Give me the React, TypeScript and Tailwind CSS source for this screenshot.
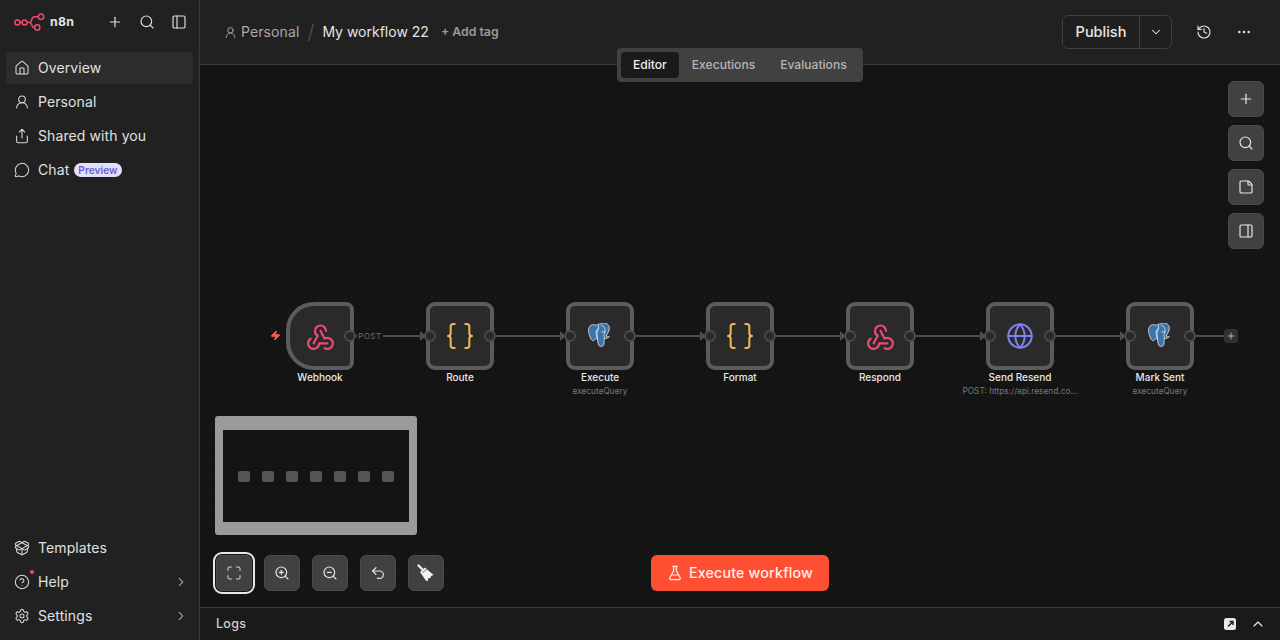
import React from "react";
import { House, UserRound, Share, MessageCircle, PackageOpen, CircleHelp, Settings, ChevronRight, Plus, Search, PanelLeft, PanelRight, History, Ellipsis, ChevronDown, StickyNote, Maximize, ZoomIn, ZoomOut, Undo2, FlaskConical, Braces, Globe, Zap, ChevronUp } from "lucide-react";
import { TbWebhook } from "react-icons/tb";

function Logo() {
  return (
    <svg width="31" height="18" viewBox="0 0 32 18" fill="none" stroke="#ea4b71" strokeWidth="1.5">
      <circle cx="3.500" cy="9.500" r="2.600" />
      <path d="M6.100 9.500h2.200" />
      <circle cx="10.900" cy="9.500" r="2.600" />
      <path d="M13.500 9.500h2.400c2 0 2-1 2.400-3 .4-2 1.400-3 3.400-3h4" />
      <circle cx="27.900" cy="3.500" r="2.800" />
      <path d="M15.900 9.500c2 0 2 .6 2.400 2.400.4 2 1.200 3 3.200 3" />
      <circle cx="24" cy="14.600" r="2.700" />
    </svg>
  );
}

function Postgres() {
  return (
    <svg width="26" height="26" viewBox="0 0 24 24">
      <path d="M6 1.500C2.800 1.500 1 4 1.500 7.800c.4 3 1.800 7.600 3.600 8.400 1.200.6 2.200-.8 3-2 .6.4 1 .5 1.600.4.200 2.500.3 6.400 2.400 7 2 .5 3.400-.6 3.600-3 .1-1 .2-3.600.2-4.400 1.400.3 4-.4 4.800-1.600-1.500.3-2.800.1-3-.6 1.500-2.200 2.900-5 2.900-7.400 0-3.200-3-4.900-6-4.600C13.400.7 10 .8 8.600 2 7.900 1.700 7 1.500 6 1.500z" fill="#3f74a8" stroke="#e8eff6" strokeWidth="0.7" strokeLinejoin="round" />
      <path d="M9.700 14.600c-.5-2-.8-6 .2-8.600.6-1.500 1.300-3 .4-4M11 5.500c-1.500 0-2.700 1.200-2.600 3 .1 1.400.3 3.500 1.300 6.100M13.300 2c1.800.6 3.500 2.300 3.400 5-.1 1.500-.9 2.400-1 3.700 0 1 .4 2.200.5 4M16.700 8.200c-1.400-.3-2.600-.3-3.200.2" fill="none" stroke="#e8eff6" strokeWidth="0.7" strokeLinecap="round" />
    </svg>
  );
}

function Broom() {
  return (
    <svg width="18" height="18" viewBox="0 0 18 18">
      <path d="M1.500 1.500 6 6" stroke="#f2f2f2" strokeWidth="2.200" strokeLinecap="round" />
      <path d="M8 3.500 16.500 11 14 12l-.5 2-2 0-1 3.500-2-1.500L3 8z" fill="#f2f2f2" />
      <path d="M5.200 8.600 9.800 5.400" stroke="#414141" strokeWidth="0.7" />
    </svg>
  );
}

function NavItem({ icon, label, active, chevron, dot, badge }: { icon: React.ReactNode; label: string; active?: boolean; chevron?: boolean; dot?: boolean; badge?: boolean }) {
  return (
    <div className={`relative mx-[6px] flex h-8 items-center rounded pl-2 pr-[5px] ${active ? "bg-[#2c2c2c]" : ""}`}>
      <span className="flex w-4 items-center justify-center text-[#d8d8d8]">{icon}</span>
      <span className="ml-2 pb-[2px] text-[14px] tracking-[0.1px] text-[#e0e0e0]">{label}</span>
      {badge && <span className="ml-[5px] rounded-full bg-[#e2dffa] px-1 text-[10.2px] leading-[14px] font-semibold text-[#6f5fd0]">Preview</span>}
      {dot && <span className="absolute top-[4px] left-[24px] h-1 w-1 rounded-full bg-[#ea4b71]" />}
      {chevron && <ChevronRight size={14} strokeWidth={1.75} className="ml-auto text-[#c4c4c4]" />}
    </div>
  );
}

function Sidebar() {
  return (
    <aside className="flex h-full w-[200px] shrink-0 flex-col border-r border-[#3a3a3a] bg-[#212121] pb-2">
      <div className="flex h-[44px] items-center pr-[12px] pl-[14px]">
        <Logo />
        <span className="ml-[5px] text-[12.3px] font-bold tracking-[0.3px] text-[#e4e4e4]">n8n</span>
        <div className="ml-auto flex items-center gap-4 text-[#e0e0e0]">
          <Plus size={16} strokeWidth={1.75} />
          <Search size={16} strokeWidth={1.75} />
          <PanelLeft size={16} strokeWidth={1.75} />
        </div>
      </div>
      <div className="mt-2 flex flex-col gap-[2px]">
        <NavItem active icon={<House size={16} strokeWidth={1.6} />} label="Overview" />
        <NavItem icon={<UserRound size={16} strokeWidth={1.6} />} label="Personal" />
        <NavItem icon={<Share size={16} strokeWidth={1.6} />} label="Shared with you" />
        <NavItem badge icon={<MessageCircle size={16} strokeWidth={1.6} />} label="Chat" />
      </div>
      <div className="mt-auto flex flex-col gap-[2px]">
        <NavItem icon={<PackageOpen size={16} strokeWidth={1.6} />} label="Templates" />
        <NavItem dot chevron icon={<CircleHelp size={16} strokeWidth={1.6} />} label="Help" />
        <NavItem chevron icon={<Settings size={16} strokeWidth={1.6} />} label="Settings" />
      </div>
    </aside>
  );
}

function Header() {
  return (
    <header className="flex h-[65px] shrink-0 items-center border-b border-[#3a3a3a] bg-[#212121] pr-[28px] pl-[24px]">
      <UserRound size={13} strokeWidth={1.75} className="text-[#a8a8a8]" />
      <span className="ml-[4px] pb-[1px] text-[14px] tracking-[0.1px] text-[#a8a8a8]">Personal</span>
      <span className="mx-[8px] text-[20px] leading-none font-light text-[#555555]">/</span>
      <span className="pb-[1px] text-[14px] text-[#e4e4e4]">My workflow 22</span>
      <span className="ml-[12px] text-[12.3px] font-semibold text-[#9a9a9a]">+ Add tag</span>
      <div className="ml-auto flex h-[34px] items-stretch overflow-hidden rounded-md border border-[#404040] bg-[#1f1f1f] text-[#e6e6e6]">
        <span className="flex w-[77px] items-center justify-center border-r border-[#404040] text-[14.5px] font-medium">Publish</span>
        <span className="flex w-[31px] items-center justify-center"><ChevronDown size={14} strokeWidth={1.75} /></span>
      </div>
      <div className="ml-[24px] flex items-center gap-[24px] text-[#e0e0e0]">
        <History size={16} strokeWidth={1.75} />
        <Ellipsis size={16} strokeWidth={1.75} />
      </div>
    </header>
  );
}

const nodes = [
  { x: 120, label: "Webhook", kind: "webhook", trigger: true },
  { x: 260, label: "Route", kind: "code" },
  { x: 400, label: "Execute", sub: "executeQuery", kind: "pg" },
  { x: 540, label: "Format", kind: "code" },
  { x: 680, label: "Respond", kind: "webhook" },
  { x: 820, label: "Send Resend", sub: "POST: https://api.resend.co...", kind: "globe" },
  { x: 960, label: "Mark Sent", sub: "executeQuery", kind: "pg" },
];

function NodeIcon({ kind }: { kind: string }) {
  if (kind === "webhook") return <TbWebhook size={33} strokeWidth={1.6} className="text-[#ea4b71]" />;
  if (kind === "code") return <Braces size={32} strokeWidth={1.5} className="text-[#f5b556]" />;
  if (kind === "globe") return <Globe size={28} strokeWidth={1.75} className="text-[#7f80ee]" />;
  return <Postgres />;
}

function FlowNode({ n }: { n: (typeof nodes)[number] }) {
  return (
    <div className="absolute top-[237px] flex w-[160px] flex-col items-center" style={{ left: n.x - 80 }}>
      <div className="relative h-[68px] w-[68px]">
        <div className={`flex h-full w-full items-center justify-center border-[4px] border-[#5c5c5c] bg-[#2a2a2a] ${n.trigger ? "rounded-l-[28px] rounded-r-[8px]" : "rounded-[9px]"}`}>
          <NodeIcon kind={n.kind} />
        </div>
        {!n.trigger && <span className="absolute top-[28px] left-[-2px] h-[12px] w-[12px] rounded-full border-2 border-[#4c4c4c] bg-[#2a2a2a]" />}
        <span className="absolute top-[28px] right-[-2px] h-[12px] w-[12px] rounded-full border-2 border-[#4c4c4c] bg-[#2a2a2a]" />
      </div>
      <div className="text-[10px] leading-[14px] font-medium text-[#e8e8e8]">{n.label}</div>
      {n.sub && <div className="mt-[1px] text-[8.3px] leading-[13px] whitespace-nowrap text-[#787878]">{n.sub}</div>}
    </div>
  );
}

function Edge({ x }: { x: number }) {
  return (
    <div className="absolute top-[270px] h-[2px] bg-[#4e4e4e]" style={{ left: x + 36, width: 68 }}>
      <span className="absolute top-[-4px] right-[-2px] h-0 w-0 border-y-[5px] border-l-[6px] border-y-transparent border-l-[#4e4e4e]" />
    </div>
  );
}

function ToolBtn({ children, focus }: { children: React.ReactNode; focus?: boolean }) {
  return (
    <div className={`flex h-9 w-9 items-center justify-center rounded-md border border-[#4a4a4a] bg-[#414141] text-[#e8e8e8] ${focus ? "outline-2 outline-offset-[1px] outline-[#e8e8e8]" : ""}`}>
      {children}
    </div>
  );
}

function Minimap() {
  return (
    <div className="absolute bottom-[72px] left-[15px] flex h-[119px] w-[202px] flex-col rounded-[3px] bg-[#9a9a9a] pt-[14px] pr-2 pb-[13px] pl-2">
      <div className="flex flex-1 items-center justify-between bg-[#141414] px-[15px]">
        {nodes.map((n) => <span key={n.x} className="h-[11px] w-[12px] rounded-[2px] bg-[#555555]" />)}
      </div>
    </div>
  );
}

function Canvas() {
  return (
    <div className="relative flex-1 overflow-hidden bg-[#141414] bg-[radial-gradient(#1f1f1f_1px,transparent_1px)] bg-[size:16px_16px]">
      {nodes.slice(0, -1).map((n) => <Edge key={n.x} x={n.x} />)}
      <div className="absolute top-[270px] left-[996px] h-[2px] w-[30px] bg-[#4e4e4e]" />
      <div className="absolute top-[264px] left-[1024px] flex h-[14px] w-[14px] items-center justify-center rounded-[3px] bg-[#303030] text-[#c8c8c8]"><Plus size={10} strokeWidth={2} /></div>
      <span className="absolute top-[265px] left-[157px] bg-[#141414] px-[1px] text-[8.2px] leading-[12px] tracking-[0.4px] text-[#6e6e6e]">POST</span>
      <Zap size={11} strokeWidth={2} className="absolute top-[265px] left-[70px] fill-[#f0604d] text-[#f0604d]" />
      {nodes.map((n) => <FlowNode key={n.x} n={n} />)}

      <div className="absolute top-[16px] right-[16px] flex flex-col gap-2">
        <ToolBtn><Plus size={16} strokeWidth={1.75} /></ToolBtn>
        <ToolBtn><Search size={16} strokeWidth={1.75} /></ToolBtn>
        <ToolBtn><StickyNote size={16} strokeWidth={1.75} /></ToolBtn>
        <ToolBtn><PanelRight size={16} strokeWidth={1.75} /></ToolBtn>
      </div>

      <Minimap />

      <div className="absolute bottom-[16px] left-[16px] flex gap-3">
        <ToolBtn focus><Maximize size={16} strokeWidth={1.5} /></ToolBtn>
        <ToolBtn><ZoomIn size={16} strokeWidth={1.75} /></ToolBtn>
        <ToolBtn><ZoomOut size={16} strokeWidth={1.75} /></ToolBtn>
        <ToolBtn><Undo2 size={16} strokeWidth={1.75} /></ToolBtn>
        <ToolBtn><Broom /></ToolBtn>
      </div>

      <div className="absolute bottom-[16px] left-[451px] flex h-9 w-[178px] items-center justify-center gap-[6px] rounded-md bg-[#ff4f33] text-[14.2px] font-medium tracking-[0.2px] text-[#fff0ec]">
        <FlaskConical size={16} strokeWidth={1.75} />
        Execute workflow
      </div>
    </div>
  );
}

function Tabs() {
  const tabs = ["Editor", "Executions", "Evaluations"];
  return (
    <div className="absolute top-[48px] left-[417px] flex h-[34px] w-[246px] items-center gap-[1px] rounded bg-[#414141] p-1">
      {tabs.map((t, i) => (
        <span key={t} className={`flex h-[26px] items-center justify-center rounded px-3 text-[12.1px] font-medium ${i === 0 ? "bg-[#1a1a1a] text-[#efefef]" : "text-[#b5b5b5]"}`}>{t}</span>
      ))}
    </div>
  );
}

export default function App() {
  return (
    <div className="flex h-screen w-full overflow-hidden bg-[#141414] font-['Inter',sans-serif]">
      <Sidebar />
      <main className="relative flex h-full min-w-0 flex-1 flex-col">
        <Header />
        <Canvas />
        <Tabs />
        <footer className="flex h-[33px] shrink-0 items-center border-t border-[#3a3a3a] bg-[#1a1a1a] pr-[14px] pl-4">
          <span className="text-[12.5px] font-medium tracking-[0.3px] text-[#d0d0d0]">Logs</span>
          <div className="ml-auto flex items-center gap-[13px] text-[#e8e8e8]">
            <svg width="14" height="14" viewBox="0 0 14 14" fill="none">
              <rect x="1" y="1" width="12" height="12" rx="2.500" fill="#e8e8e8" />
              <path d="M5 9.500 10 4.500M6.500 4.500H10V8" stroke="#1a1a1a" strokeWidth="1.400" />
            </svg>
            <ChevronUp size={16} strokeWidth={1.75} />
          </div>
        </footer>
      </main>
    </div>
  );
}
